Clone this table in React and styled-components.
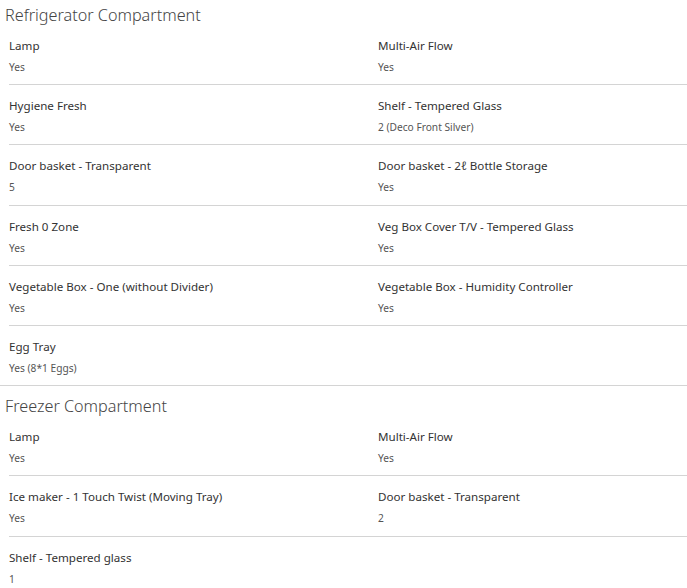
import React from "react";
import styled, { createGlobalStyle } from "styled-components";

const Global = createGlobalStyle`
  html, body { margin: 0; padding: 0; background: #fff; }
  body { font-family: "Noto Sans", "Open Sans", sans-serif; color: #333; }
`;

const Page = styled.div`
  width: 687px;
`;

const Section = styled.section`
  border-bottom: 1px solid #d4d4d4;
`;

const Title = styled.h2`
  margin: 0;
  padding: ${(p) => (p.$first ? "6px" : "11px")} 5px 0;
  font-size: 16.2px;
  line-height: 19px;
  font-weight: 300;
  color: #444;
`;

const Grid = styled.div`
  display: grid;
  grid-template-columns: 369px 1fr;
  padding-left: 9px;
`;

const Item = styled.div`
  padding: 12px 0 8.2px;
  border-bottom: 1px solid #d4d4d4;
  ${(p) => (p.$last ? "border-bottom: none;" : "")}
`;

const Label = styled.div`
  font-size: 11.6px;
  line-height: 18px;
  color: #333;
`;

const Value = styled.div`
  margin-top: 3px;
  font-size: 10.2px;
  line-height: 18px;
  color: #555;
`;

const sections = [
  {
    title: "Refrigerator Compartment",
    items: [
      ["Lamp", "Yes"],
      ["Multi-Air Flow", "Yes"],
      ["Hygiene Fresh", "Yes"],
      ["Shelf - Tempered Glass", "2 (Deco Front Silver)"],
      ["Door basket - Transparent", "5"],
      ["Door basket - 2ℓ Bottle Storage", "Yes"],
      ["Fresh 0 Zone", "Yes"],
      ["Veg Box Cover T/V - Tempered Glass", "Yes"],
      ["Vegetable Box - One (without Divider)", "Yes"],
      ["Vegetable Box - Humidity Controller", "Yes"],
      ["Egg Tray", "Yes (8*1 Eggs)"],
    ],
  },
  {
    title: "Freezer Compartment",
    items: [
      ["Lamp", "Yes"],
      ["Multi-Air Flow", "Yes"],
      ["Ice maker - 1 Touch Twist (Moving Tray)", "Yes"],
      ["Door basket - Transparent", "2"],
      ["Shelf - Tempered glass", "1"],
    ],
  },
];

export default function App() {
  return (
    <Page>
      <Global />
      {sections.map((s, si) => {
        const n = s.items.length;
        const lastRowStart = n % 2 === 0 ? n - 2 : n - 1;
        return (
          <Section key={s.title}>
            <Title $first={si === 0}>{s.title}</Title>
            <Grid>
              {s.items.map(([l, v], i) => (
                <Item key={i} $last={i >= lastRowStart}>
                  <Label>{l}</Label>
                  <Value>{v}</Value>
                </Item>
              ))}
            </Grid>
          </Section>
        );
      })}
    </Page>
  );
}
